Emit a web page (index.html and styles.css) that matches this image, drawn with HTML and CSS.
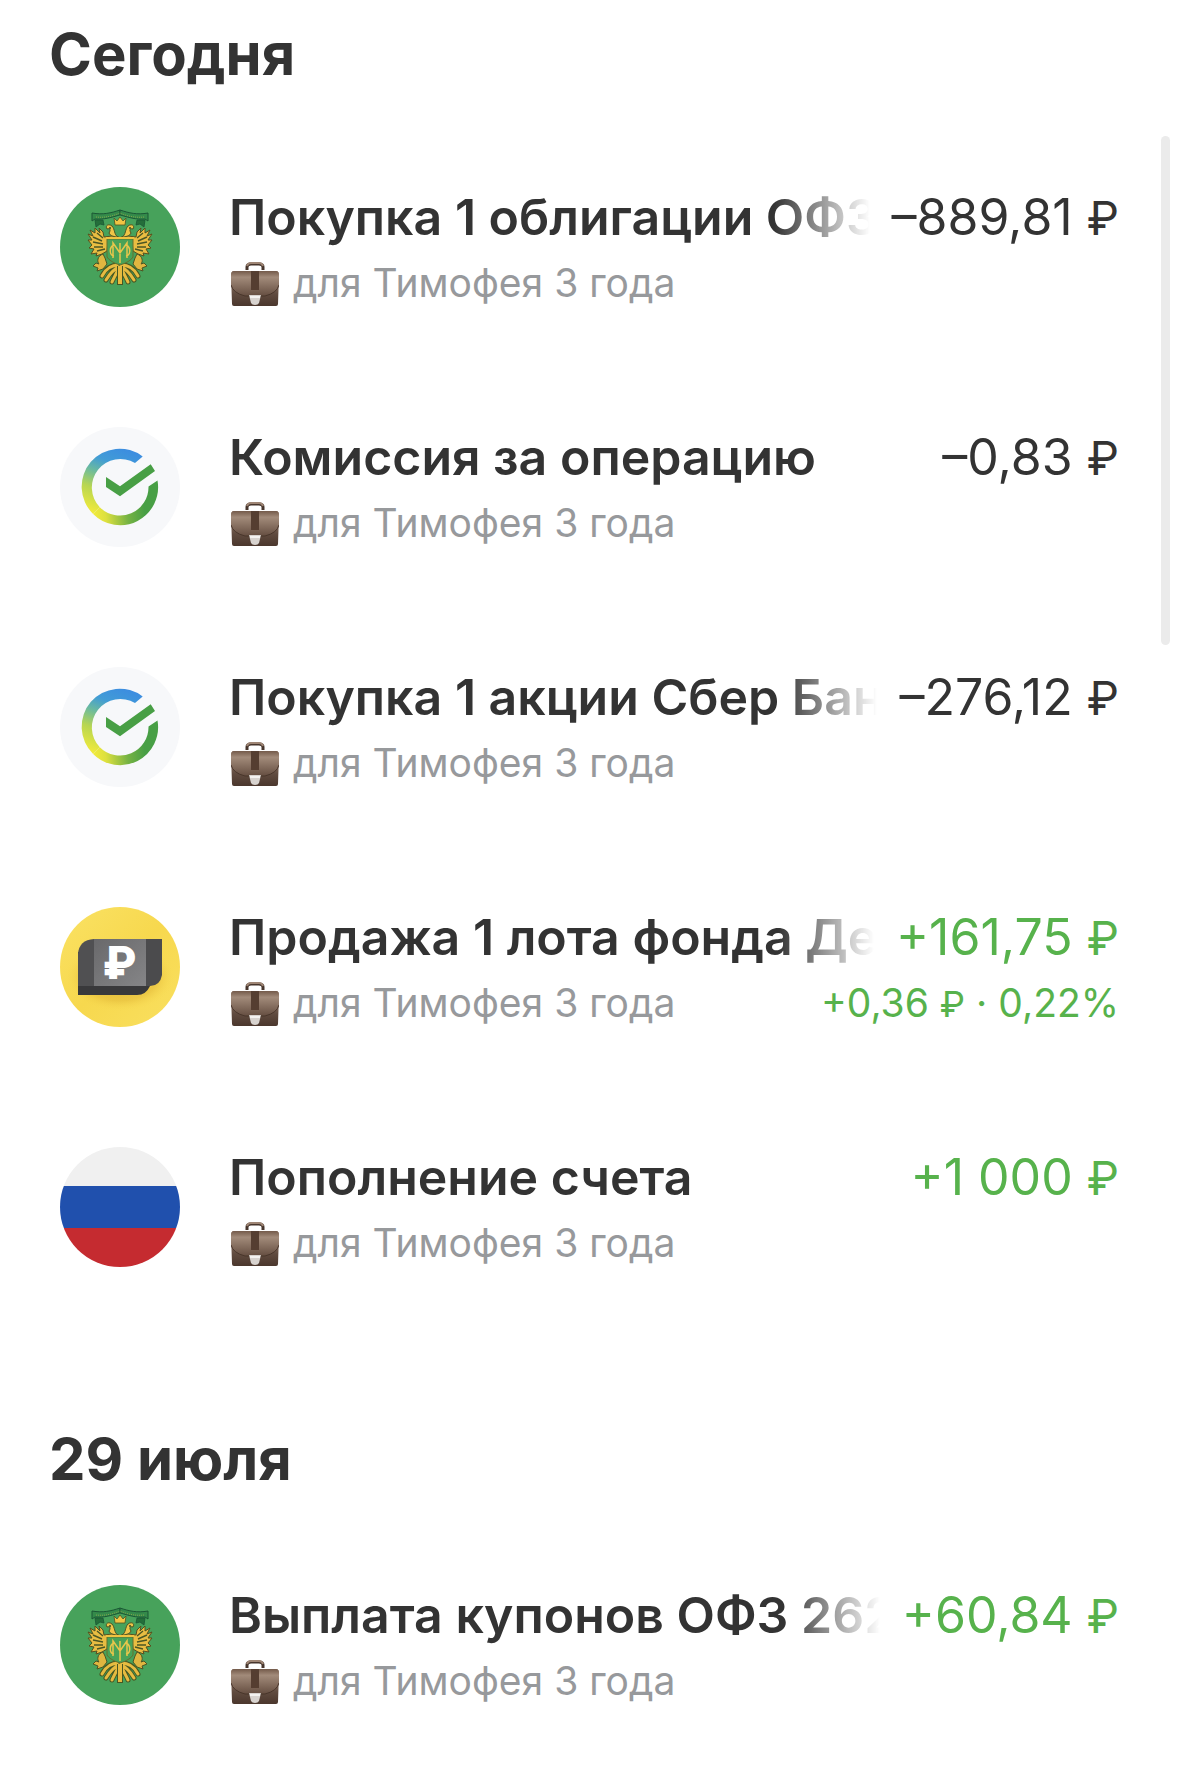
FILE: index.html
```html
<!DOCTYPE html>
<html lang="ru">
<head>
<meta charset="utf-8">
<meta name="viewport" content="width=device-width, initial-scale=1">
<title>История операций</title>
<link rel="stylesheet" href="styles.css">
</head>
<body>
<svg class="sprite" aria-hidden="true">
  <defs>
    <linearGradient id="ring-left" gradientUnits="userSpaceOnUse" x1="66" y1="22" x2="40" y2="88">
      <stop offset="0" stop-color="#3c8de0"/><stop offset=".25" stop-color="#419cd6"/>
      <stop offset=".45" stop-color="#6dbb9c"/><stop offset=".68" stop-color="#b8d651"/><stop offset="1" stop-color="#f0ea3c"/>
    </linearGradient>
    <linearGradient id="ring-right" gradientUnits="userSpaceOnUse" x1="34" y1="84" x2="84" y2="78">
      <stop offset="0" stop-color="#f0ea3c"/><stop offset=".22" stop-color="#dce03e"/>
      <stop offset=".65" stop-color="#76b343"/><stop offset="1" stop-color="#489f45"/>
    </linearGradient>
    <linearGradient id="coin" x1="0" y1="0" x2="1" y2="1">
      <stop offset="0" stop-color="#fae264"/><stop offset=".5" stop-color="#f7d84e"/><stop offset="1" stop-color="#f9e060"/>
    </linearGradient>
    <radialGradient id="coin-shade">
      <stop offset="0" stop-color="#c99a20" stop-opacity=".7"/><stop offset=".7" stop-color="#dcae30" stop-opacity=".4"/><stop offset="1" stop-color="#f7d84e" stop-opacity="0"/>
    </radialGradient>
    <linearGradient id="note" x1="0" y1="0" x2="1" y2="1">
      <stop offset="0" stop-color="#69696b"/><stop offset="1" stop-color="#858587"/>
    </linearGradient>
    <linearGradient id="leather" x1="0" y1="0" x2="0" y2="1">
      <stop offset="0" stop-color="#a08877"/><stop offset=".3" stop-color="#8b7262"/><stop offset=".65" stop-color="#604b3f"/><stop offset="1" stop-color="#4b372d"/>
    </linearGradient>
    <linearGradient id="flap" x1="0" y1="0" x2="0" y2="1">
      <stop offset="0" stop-color="#735a4a"/><stop offset=".25" stop-color="#a28b7a"/><stop offset="1" stop-color="#654e41"/>
    </linearGradient>
    <g id="eagle-half">
      <path d="M59 50 L52 49 L44 50 L43 45 L39 41 L40 46 L35 41 L35 46 L30 43 L33 49 L28 47 L32 53 L28 53 L32 58 L29 61 L34 62 L31 67 L37 66 L36 69 L42 67 L47 64 L48 54 L59 52Z" fill="#e9bd42" stroke="#57501f" stroke-width="1"/>
      <path d="M33 50 L42 54 M33 55 L43 57 M34 60 L43 60 M37 64 L45 62 M37 46 L43 51" fill="none" stroke="#4c5724" stroke-width="1.4"/>
      <path d="M58 50 C54 48 55 42 52 39 C48 36 45 39 47 42 C50 41 51 43 49 46 C50 49 55 50 58 50Z" fill="#efc447" stroke="#4c5422" stroke-width="1"/>
      <circle cx="50" cy="41" r="1" fill="#314c23"/>
      <path d="M43 67 C37 69 37 75 39 77 L36 76 L33 79 L38 81 L37 84 L43 82 L47 77 L45 71Z" fill="#e0b640" stroke="#4c5624" stroke-width="1"/>
      <path d="M59 78 C52 78 46 81 42 89 M59 80 C54 82 49 88 46 93 M59 80 C57 86 53 92 52 95" fill="none" stroke="#475723" stroke-width="5" stroke-linecap="round"/>
      <path d="M59 78 C52 78 46 81 42 89 M59 80 C54 82 49 88 46 93 M59 80 C57 86 53 92 52 95" fill="none" stroke="#e6bb40" stroke-width="3" stroke-linecap="round"/>
      <path d="M32 26 C43 28 51 26 60 23 V28 C52 30 44 33 35 32 L32 34 Z" fill="#348a4a" stroke="#1b5735" stroke-width="1"/>
      <path d="M35 33 L43 33 L44 38 L40 37 L36 40 Z" fill="#246e3a" stroke="#1b5735" stroke-width=".8"/>
      <path d="M36 30 C45 31 53 29 60 26" fill="none" stroke="#83a54b" stroke-width="1" stroke-dasharray="1 1"/>
    </g>
    <symbol id="emblem" viewBox="0 0 120 120">
      <circle cx="60" cy="60" r="60" fill="#47a25b"/>
      <use href="#eagle-half"/>
      <use href="#eagle-half" transform="matrix(-1 0 0 1 120 0)"/>
      <path d="M60 79 V98" stroke="#475723" stroke-width="6"/><path d="M60 79 V97" stroke="#e6bb40" stroke-width="4"/>
      <path d="M55 38 L54 31 L57 34 L60 30 L63 34 L66 31 L65 38Z" fill="#f0c443" stroke="#4c5422" stroke-width=".8"/>
      <path d="M47 52 H73 V70 Q70 75 60 78 Q50 75 47 70Z" fill="#48a257" stroke="#66702c" stroke-width="1"/>
      <path d="M46 51 H74" stroke="#efc341" stroke-width="2"/>
      <path d="M53 71 V56 L60 66 L67 56 V71 M60 56 V76 M54 58 C49 60 49 68 54 69 M66 58 C71 60 71 68 66 69" fill="none" stroke="#e7c64b" stroke-width="1.5"/>
    </symbol>
    <symbol id="check-ring" viewBox="0 0 120 120">
      <circle cx="60" cy="60" r="60" fill="#f7f8fa"/>
      <path d="M82.7 29.5 A38 38 0 0 0 33.1 86.9 L39.8 80.2 A28.5 28.5 0 0 1 75 36Z" fill="url(#ring-left)"/>
      <path d="M33.1 86.9 A38 38 0 0 0 97.5 53.5 L88.5 59.5 A28.5 28.5 0 0 1 39.8 80.2Z" fill="url(#ring-right)"/>
      <path d="M46 50 L60 59.3 L90.7 37.3 L95 44 L60 69.3 L46 60Z" fill="#489f45"/>
    </symbol>
    <symbol id="fund" viewBox="0 0 120 120">
      <circle cx="60" cy="60" r="60" fill="url(#coin)"/>
      <ellipse cx="60" cy="70" rx="54" ry="34" fill="url(#coin-shade)"/>
      <path d="M18 45 H86 L90 79 Q86 88 77 88 H18Z" fill="#39393b"/>
      <path d="M34 32 V79 H18 V47 Q19 33 34 32Z" fill="#505052"/>
      <path d="M86 32 H102 V68 Q100 79 90 79 H86Z" fill="#4b4b4d"/>
      <path d="M34 32 H86 V79 H34Z" fill="url(#note)"/>
      <text x="60" y="72" class="fund-sign">₽</text>
    </symbol>
    <symbol id="flag" viewBox="0 0 120 120">
      <clipPath id="flag-round"><circle cx="60" cy="60" r="60"/></clipPath>
      <g clip-path="url(#flag-round)"><path d="M0 0H120V39H0Z" fill="#f0f0f0"/><path d="M0 39H120V81H0Z" fill="#2050ad"/><path d="M0 81H120V120H0Z" fill="#c52b30"/></g>
    </symbol>
    <symbol id="briefcase" viewBox="0 0 48 44">
      <path d="M16 8 V5 Q16 2 20 2 H28 Q32 2 32 5 V8" fill="none" stroke="#46352c" stroke-width="3"/>
      <path d="M16 4 Q17 1 20 1 H28 Q31 1 32 4" fill="none" stroke="#9e8574" stroke-width="2"/>
      <path d="M3 9 H45 Q48 9 48 13 L47 42 Q47 44 45 44 H3 Q1 44 1 42 L0 13 Q0 9 3 9Z" fill="url(#leather)"/>
      <path d="M3 9 H45 Q48 9 48 13 V23 Q46 31 34 34 H14 Q2 31 0 23 V13 Q0 9 3 9Z" fill="url(#flap)"/>
      <path d="M0 23 Q2 31 14 34 H34 Q46 31 48 23" fill="none" stroke="#49362b" stroke-width="1"/>
      <path d="M20 9 H28 V28 H20Z" fill="#553e31"/>
      <path d="M18 33 H30 L28 41 Q27 43 24 43 Q21 43 20 41Z" fill="#d8d3cf"/>
      <path d="M19 34 H29 V36 H19Z" fill="#f4f2f0"/>
    </symbol>
  </defs>
</svg>

<main class="history">
  <section class="day">
    <h2 class="day-title">Сегодня</h2>
    <ul class="operations">
      <li class="operation">
        <svg class="avatar" aria-hidden="true"><use href="#emblem"/></svg>
        <div class="details">
          <div class="line"><span class="name name-faded">Покупка 1 облигации ОФЗ</span><span class="amount">–889,81 <span class="ruble">₽</span></span></div>
          <div class="line"><span class="account"><svg class="case" aria-hidden="true"><use href="#briefcase"/></svg>для Тимофея 3 года</span></div>
        </div>
      </li>
      <li class="operation">
        <svg class="avatar" aria-hidden="true"><use href="#check-ring"/></svg>
        <div class="details">
          <div class="line"><span class="name">Комиссия за операцию</span><span class="amount">–0,83 <span class="ruble">₽</span></span></div>
          <div class="line"><span class="account"><svg class="case" aria-hidden="true"><use href="#briefcase"/></svg>для Тимофея 3 года</span></div>
        </div>
      </li>
      <li class="operation">
        <svg class="avatar" aria-hidden="true"><use href="#check-ring"/></svg>
        <div class="details">
          <div class="line"><span class="name name-faded">Покупка 1 акции Сбер Бан</span><span class="amount">–276,12 <span class="ruble">₽</span></span></div>
          <div class="line"><span class="account"><svg class="case" aria-hidden="true"><use href="#briefcase"/></svg>для Тимофея 3 года</span></div>
        </div>
      </li>
      <li class="operation">
        <svg class="avatar" aria-hidden="true"><use href="#fund"/></svg>
        <div class="details">
          <div class="line"><span class="name name-faded">Продажа 1 лота фонда Де</span><span class="amount income">+161,75 <span class="ruble">₽</span></span></div>
          <div class="line"><span class="account"><svg class="case" aria-hidden="true"><use href="#briefcase"/></svg>для Тимофея 3 года</span><span class="profit income">+0,36 <span class="ruble">₽</span> · 0,22%</span></div>
        </div>
      </li>
      <li class="operation">
        <svg class="avatar" aria-hidden="true"><use href="#flag"/></svg>
        <div class="details">
          <div class="line"><span class="name">Пополнение счета</span><span class="amount income">+1 000 <span class="ruble">₽</span></span></div>
          <div class="line"><span class="account"><svg class="case" aria-hidden="true"><use href="#briefcase"/></svg>для Тимофея 3 года</span></div>
        </div>
      </li>
    </ul>
  </section>
  <section class="day">
    <h2 class="day-title">29 июля</h2>
    <ul class="operations">
      <li class="operation">
        <svg class="avatar" aria-hidden="true"><use href="#emblem"/></svg>
        <div class="details">
          <div class="line"><span class="name name-faded">Выплата купонов ОФЗ 262</span><span class="amount income">+60,84 <span class="ruble">₽</span></span></div>
          <div class="line"><span class="account"><svg class="case" aria-hidden="true"><use href="#briefcase"/></svg>для Тимофея 3 года</span></div>
        </div>
      </li>
    </ul>
  </section>
</main>
<div class="scroll-thumb" aria-hidden="true"></div>
</body>
</html>
```

FILE: styles.css
```css
* {
  box-sizing: border-box;
}

body {
  margin: 0;
  background: #fff;
  color: #333;
  font-family: Inter, "Liberation Sans", sans-serif;
}

.sprite {
  position: absolute;
  width: 0;
  height: 0;
}

.history {
  padding: 18px 60px 0 49px;
}

.day-title {
  margin: 0;
  padding-bottom: 29px;
  font-size: 58px;
  line-height: 72px;
  font-weight: 700;
}

.day + .day {
  margin-top: 104px;
}

.day + .day .day-title {
  padding-bottom: 22px;
}

.operations {
  margin: 0;
  padding: 0;
  list-style: none;
}

.operation {
  display: flex;
  align-items: flex-start;
  gap: 49px;
  padding: 68px 0 46px 11px;
}

.avatar {
  flex: none;
  width: 120px;
  height: 120px;
}

.details {
  flex: 1;
  display: flex;
  flex-direction: column;
  gap: 6px;
  min-width: 0;
}

.line {
  display: flex;
  align-items: center;
  justify-content: space-between;
  gap: 22px;
  height: 60px;
  white-space: nowrap;
}

.name,
.amount {
  font-size: 50px;
  line-height: 60px;
}

.name {
  min-width: 0;
  overflow: hidden;
  font-weight: 600;
}

.name-faded {
  flex: 1;
  -webkit-mask-image: linear-gradient(to left, transparent, #000 96px);
  mask-image: linear-gradient(to left, transparent, #000 96px);
}

.account,
.profit {
  font-size: 39px;
  line-height: 60px;
}

.account {
  display: flex;
  align-items: center;
  gap: 14px;
  color: #97999c;
}

.case {
  width: 48px;
  height: 44px;
  margin: 2px 0 0 2px;
}

.income {
  color: #57b24c;
}

.ruble {
  line-height: 1;
}

.amount .ruble {
  font-size: 46px;
}

.profit .ruble {
  font-size: 36px;
}

.fund-sign {
  fill: #fff;
  font-family: Roboto, Inter, sans-serif;
  font-size: 46px;
  font-weight: 900;
  text-anchor: middle;
}

.scroll-thumb {
  position: absolute;
  top: 136px;
  right: 9px;
  width: 9px;
  height: 509px;
  border-radius: 5px;
  background: #ebebeb;
}
```
